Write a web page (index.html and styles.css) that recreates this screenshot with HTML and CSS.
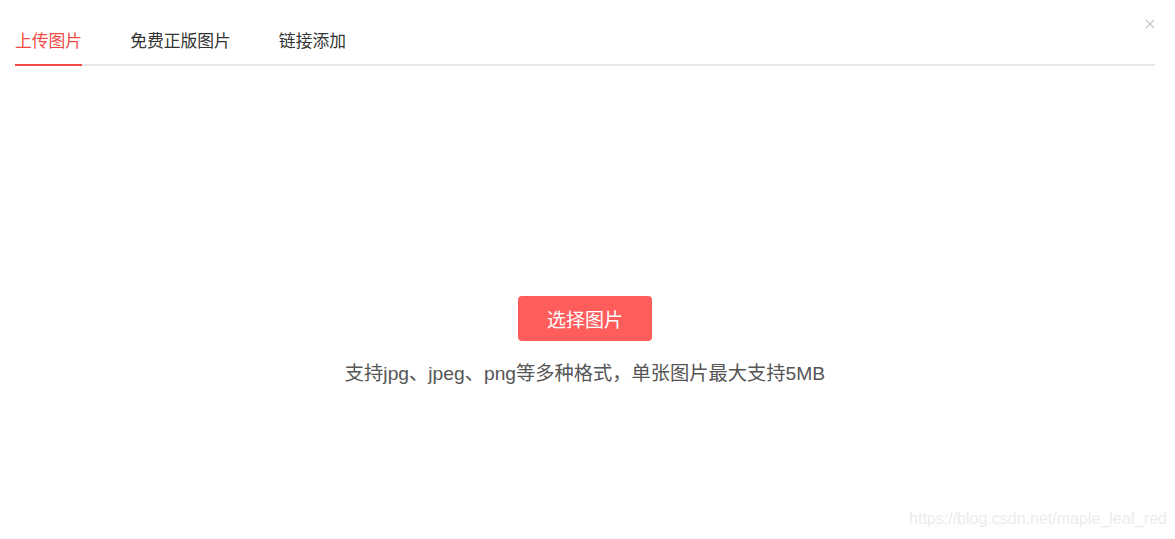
FILE: index.html
```html
<!DOCTYPE html>
<html lang="zh">
<head>
<meta charset="utf-8">
<link rel="stylesheet" href="styles.css">
</head>
<body>
<div class="dialog">
  <button class="close" aria-label="close">
    <svg width="10" height="10" viewBox="0 0 10 10"><path d="M1 1L9 9M9 1L1 9" stroke="#c8c8c8" stroke-width="1.2" fill="none"/></svg>
  </button>
  <div class="tabs">
    <div class="tab active">上传图片</div>
    <div class="tab">免费正版图片</div>
    <div class="tab">链接添加</div>
  </div>
  <div class="body">
    <button class="pick">选择图片</button>
    <p class="hint">支持jpg、jpeg、png等多种格式，单张图片最大支持5MB</p>
  </div>
  <div class="watermark">https://blog.csdn.net/maple_leaf_red</div>
</div>
</body>
</html>
```
FILE: styles.css
```css
* { box-sizing: border-box; }
html, body { margin: 0; padding: 0; background: #fff; }
body {
  font-family: "Liberation Sans", "Noto Sans CJK SC", sans-serif;
  width: 1175px;
  height: 539px;
  overflow: hidden;
}
.dialog {
  position: relative;
  height: 539px;
  padding: 25px 20px 0 15px;
  display: flex;
  flex-direction: column;
}
.close {
  position: absolute;
  top: 19px;
  right: 20px;
  width: 10px;
  height: 10px;
  padding: 0;
  border: 0;
  background: none;
  display: flex;
}
.tabs {
  display: flex;
  gap: 48px;
  border-bottom: 2px solid #e6e6ec;
  height: 41px;
}
.tab {
  font-size: 16.8px;
  line-height: 34px;
  color: #333;
  height: 39px;
  position: relative;
}
.tab.active {
  color: #f04a45;
}
.tab.active::after {
  content: "";
  position: absolute;
  left: 0;
  right: 0;
  bottom: -2px;
  height: 2px;
  background: #ee4b45;
}
.body {
  display: flex;
  flex-direction: column;
  align-items: center;
  padding-top: 230px;
  margin-left: -15px;
  margin-right: -15px;
}
.pick {
  width: 134px;
  height: 45px;
  border: 0;
  border-radius: 4px;
  background: #ff5c5c;
  color: #fff;
  font-family: inherit;
  font-size: 19px;
  padding: 0;
}
.hint {
  margin: 19px 0 0;
  font-size: 19.25px;
  line-height: 28px;
  color: #555;
}
.watermark {
  position: absolute;
  right: 8px;
  bottom: 11px;
  font-family: "Liberation Sans", Arial, sans-serif;
  font-size: 16px;
  color: #ececec;
}
```
